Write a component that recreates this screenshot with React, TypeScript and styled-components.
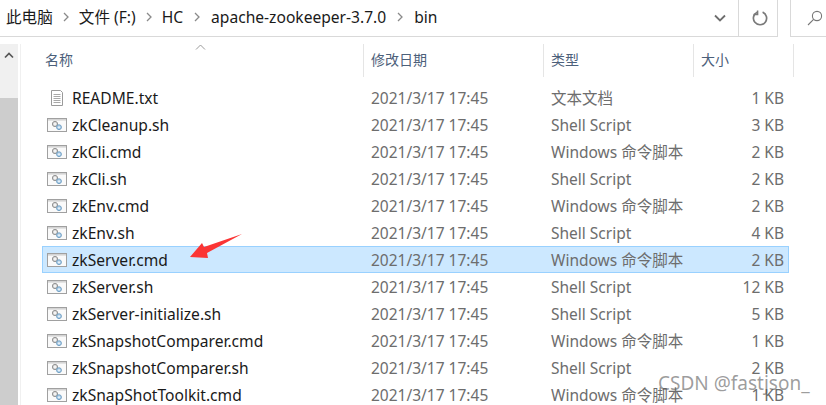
import React from "react";
import styled, { createGlobalStyle } from "styled-components";

const Global = createGlobalStyle`
  html, body { margin: 0; padding: 0; background: #fff; overflow: hidden; }
  body { font-family: "Noto Sans", "Noto Sans CJK SC", sans-serif; }
`;
const Page = styled.div`
  position: relative; width: 826px; height: 405px; overflow: hidden; background: #fff;
  display: flex; flex-direction: column;
`;
const TopBar = styled.div`display: flex; height: 37px; flex: none;`;
const AddressBox = styled.div`
  width: 778px; height: 37px; box-sizing: border-box; display: flex; align-items: center;
  border-bottom: 1px solid #d9d9d9; border-right: 1px solid #d9d9d9;
`;
const Crumbs = styled.div`
  flex: 1; display: flex; align-items: center; padding: 0 0 2px 6px; font-size: 15.6px; color: #1a1a1a;
`;
const Crumb = styled.span`line-height: 20px; white-space: nowrap;`;
const Sep = styled.svg`width: 6px; height: 10px; margin: 0 ${(p: { $gap?: number }) => p.$gap ?? 11}px; flex: none;`;
const DropBtn = styled.div`width: 24px; height: 36px; margin-right: 6px; display: flex; align-items: center; justify-content: center;`;
const RefreshBtn = styled.div`width: 39px; height: 36px; box-sizing: border-box; padding-left: 3px; border-left: 1px solid #d9d9d9; display: flex; align-items: center; justify-content: center;`;
const SearchBox = styled.div`
  margin-left: 12px; flex: 1; height: 37px; box-sizing: border-box; border-left: 1px solid #d9d9d9; border-bottom: 1px solid #d9d9d9;
  display: flex; align-items: center; padding-left: 16px;
`;
const Body = styled.div`flex: 1; display: flex; padding-top: 7px; min-height: 0;`;
const Scrollbar = styled.div`
  width: 18px; flex: none; background: #f0f0f0; display: flex; flex-direction: column; margin-right: 24px;
`;
const ScrollUp = styled.div`height: 54px; display: flex; justify-content: center; padding-top: 8px; box-sizing: border-box;`;
const ScrollThumb = styled.div`flex: 1; background: #cdcdcd;`;
const Divider = styled.div`width: 1px; background: #f0f0f0; margin-left: -22px; margin-right: 21px; flex: none;`;
const List = styled.div`flex: 1; min-width: 0; display: flex; flex-direction: column;`;
const Header = styled.div`
  position: relative; display: grid; grid-template-columns: 322px 180px 150px 100px; height: 33px; width: 752px; flex: none;
  margin-bottom: 7px;
`;
const HeadCell = styled.div<{ $pad: number }>`
  font-size: 14px; color: #4c607a; padding-left: ${(p) => p.$pad}px; line-height: 31px; border-right: 1px solid #e5e5e5;
`;
const SortCaret = styled.svg`position: absolute; left: 153px; top: 0; width: 11px; height: 6px;`;
const Row = styled.div<{ $sel?: boolean }>`
  display: grid; grid-template-columns: 329px 180px 150px 83px; height: 27px; width: 747px; box-sizing: border-box; align-items: center; flex: none;
  background: ${(p) => (p.$sel ? "#cce8ff" : "transparent")};
  box-shadow: ${(p) => (p.$sel ? "inset 0 0 0 1px #99d1ff" : "none")};
`;
const NameCell = styled.div`display: flex; align-items: center; padding-left: 5px; font-size: 15.6px; color: #1a1a1a; white-space: nowrap;`;
const IconWrap = styled.svg`width: 20px; height: 18px; margin-right: 5px; flex: none;`;
const Meta = styled.div`font-size: 15.5px; color: #6d6d6d; white-space: nowrap;`;
const Size = styled(Meta)`text-align: right;`;
const Arrow = styled.svg`position: absolute; left: 188px; top: 233px; width: 56px; height: 28px;`;
const Watermark = styled.div`
  position: absolute; left: 658px; top: 370px; font-size: 19px; color: rgba(90, 90, 90, 0.6); white-space: nowrap;
`;

const TxtIcon = () => (
  <IconWrap viewBox="0 0 20 18">
    <path d="M4.5 1.5h9l2 2v13h-11z" fill="#fff" stroke="#9a9a9a" />
    <path d="M6.5 5.5h7M6.5 7.5h7M6.5 9.5h7M6.5 11.5h7M6.5 13.5h7" stroke="#a8a8a8" />
  </IconWrap>
);
const CmdIcon = () => (
  <IconWrap viewBox="0 0 20 18">
    <rect x="0.5" y="2.5" width="19" height="13" fill="#fafafa" stroke="#a0a0a0" />
    <rect x="1" y="3" width="18" height="1.6" fill="#d4d4d4" />
    <circle cx="8" cy="8" r="2.6" fill="#dcdcdc" stroke="#929292" />
    <circle cx="8" cy="8" r="0.9" fill="#fff" />
    <circle cx="12" cy="11.2" r="2.4" fill="#b6d3ea" stroke="#6f9fc4" />
    <circle cx="12" cy="11.2" r="0.8" fill="#fff" />
  </IconWrap>
);
const Chevron = ({ gap }: { gap?: number }) => (
  <Sep viewBox="0 0 6 10" $gap={gap}>
    <path d="M1 1l4 4-4 4" fill="none" stroke="#8a8a8a" strokeWidth="1.3" />
  </Sep>
);

type F = { name: string; type: string; size: string; txt?: boolean; sel?: boolean };
const CMD = "Windows 命令脚本";
const SH = "Shell Script";
const files: F[] = [
  { name: "README.txt", type: "文本文档", size: "1 KB", txt: true },
  { name: "zkCleanup.sh", type: SH, size: "3 KB" },
  { name: "zkCli.cmd", type: CMD, size: "2 KB" },
  { name: "zkCli.sh", type: SH, size: "2 KB" },
  { name: "zkEnv.cmd", type: CMD, size: "2 KB" },
  { name: "zkEnv.sh", type: SH, size: "4 KB" },
  { name: "zkServer.cmd", type: CMD, size: "2 KB", sel: true },
  { name: "zkServer.sh", type: SH, size: "12 KB" },
  { name: "zkServer-initialize.sh", type: SH, size: "5 KB" },
  { name: "zkSnapshotComparer.cmd", type: CMD, size: "1 KB" },
  { name: "zkSnapshotComparer.sh", type: SH, size: "2 KB" },
  { name: "zkSnapShotToolkit.cmd", type: CMD, size: "1 KB" },
];

export default function App() {
  return (
    <Page>
      <Global />
      <TopBar>
        <AddressBox>
          <Crumbs>
            <Crumb>此电脑</Crumb>
            <Chevron gap={10} />
            <Crumb>文件 (F:)</Crumb>
            <Chevron gap={10} />
            <Crumb>HC</Crumb>
            <Chevron gap={11} />
            <Crumb>apache-zookeeper-3.7.0</Crumb>
            <Chevron gap={11} />
            <Crumb>bin</Crumb>
          </Crumbs>
          <DropBtn>
            <svg width="12" height="8" viewBox="0 0 12 8">
              <path d="M1 1.5l5 5 5-5" fill="none" stroke="#6e6e6e" strokeWidth="1.8" />
            </svg>
          </DropBtn>
          <RefreshBtn>
            <svg width="16" height="16" viewBox="0 0 16 16">
              <path d="M5.2 2.2A6.6 6.6 0 1 0 10.6 2.1" fill="none" stroke="#7a7a7a" strokeWidth="1.7" />
              <path d="M5.6 0.4V4.4H1.8" fill="none" stroke="#7a7a7a" strokeWidth="1.5" />
            </svg>
          </RefreshBtn>
        </AddressBox>
        <SearchBox>
          <svg width="16" height="16" viewBox="0 0 16 16">
            <circle cx="10" cy="6" r="4.6" fill="none" stroke="#777" strokeWidth="1.1" />
            <path d="M6.6 9.4L1 15" stroke="#777" strokeWidth="1.1" />
          </svg>
        </SearchBox>
      </TopBar>
      <Body>
        <Scrollbar>
          <ScrollUp>
            <svg width="10" height="7" viewBox="0 0 10 7">
              <path d="M1 5.5l4-4 4 4" fill="none" stroke="#555" strokeWidth="1.7" />
            </svg>
          </ScrollUp>
          <ScrollThumb />
        </Scrollbar>
        <Divider />
        <List>
          <Header>
            <SortCaret viewBox="0 0 11 6">
              <path d="M1 5.5l4.5-4.5 4.5 4.5" fill="none" stroke="#9a9a9a" />
            </SortCaret>
            <HeadCell $pad={3}>名称</HeadCell>
            <HeadCell $pad={7}>修改日期</HeadCell>
            <HeadCell $pad={7}>类型</HeadCell>
            <HeadCell $pad={7}>大小</HeadCell>
          </Header>
          {files.map((f) => (
            <Row key={f.name} $sel={f.sel}>
              <NameCell>
                {f.txt ? <TxtIcon /> : <CmdIcon />}
                {f.name}
              </NameCell>
              <Meta>2021/3/17 17:45</Meta>
              <Meta>{f.type}</Meta>
              <Size>{f.size}</Size>
            </Row>
          ))}
        </List>
      </Body>
      <Arrow viewBox="0 0 56 28">
        <path d="M2 24L14 10l2 4L54 1 19 20l1 5z" fill="#fb3535" />
      </Arrow>
      <Watermark>CSDN @fastjson_</Watermark>
    </Page>
  );
}
